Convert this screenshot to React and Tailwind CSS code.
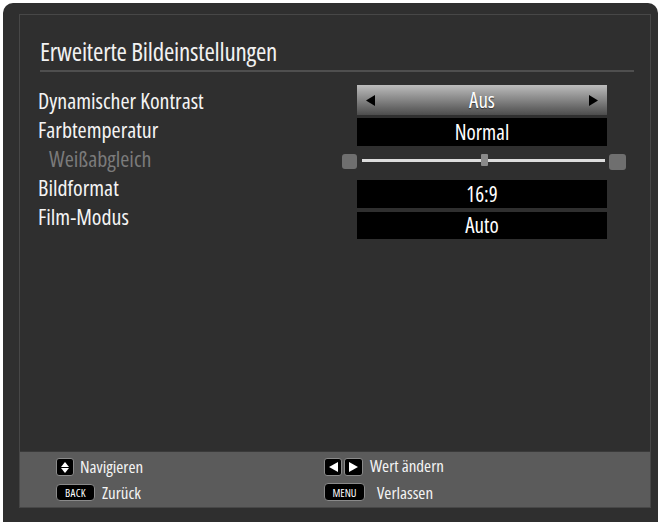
import React from 'react';

const font = { fontFamily: '"Open Sans", "DejaVu Sans Condensed", sans-serif', fontStretch: '75%' };

const labels = [
  { text: 'Dynamischer Kontrast' },
  { text: 'Farbtemperatur' },
  { text: 'Weißabgleich', dim: true },
  { text: 'Bildformat' },
  { text: 'Film-Modus' },
];

const Key = ({ children, className = '' }) => (
  <div className={`flex items-center justify-center rounded-[3px] border border-[#8a8a8a] bg-black ${className}`}>
    {children}
  </div>
);

const App = () => {
  return (
    <div className="w-[661px] h-[522px] bg-white pt-[3px] px-[3px] overflow-hidden" style={font}>
      <div className="h-[519px] rounded-t-[10px] bg-[#2f2f2f] pt-[11px] pl-[16px] pr-[6px]">
        <div className="w-[632px] h-[494px] border border-[#474747] flex flex-col">
          {/* title */}
          <div className="ml-[20px] w-[594px] mt-[21px] pb-[3px] border-b-2 border-[#4f4f4f]">
            <h1 className="text-[25px] leading-[31px] text-[#f2f2f2] tracking-[-0.2px]">Erweiterte Bildeinstellungen</h1>
          </div>

          <div className="flex items-start mt-[13px]">
            {/* labels */}
            <div className="w-[322px] pl-[18px] pt-[1px]">
              {labels.map((l) => (
                <div
                  key={l.text}
                  className={`h-[29px] text-[22px] leading-[29px] ${l.dim ? 'pl-[11px] text-[#7b7b7b]' : 'text-[#f4f4f4]'}`}
                >
                  {l.text}
                </div>
              ))}
            </div>

            {/* values */}
            <div className="w-[284px] flex flex-col text-[21px] text-white">
              <div className="ml-[15px] w-[250px] h-[30px] flex items-center justify-between px-[9px] bg-gradient-to-b from-[#bdbdbd] via-[#858585] to-[#4d4d4d]">
                <svg width="9" height="11" viewBox="0 0 9 11"><path d="M0 5.5 L9 0 L9 11 Z" fill="#000" /></svg>
                <span className="leading-none [text-shadow:0_1px_1px_#333]">Aus</span>
                <svg width="9" height="11" viewBox="0 0 9 11"><path d="M9 5.5 L0 0 L0 11 Z" fill="#000" /></svg>
              </div>
              <div className="ml-[15px] mt-[3px] w-[250px] h-[28px] bg-black flex items-center justify-center leading-none">Normal</div>
              <div className="h-[34px] pt-[8px] flex items-start">
                <div className="w-[15px] h-[15px] rounded-[3px] bg-[#6f6f6f]" />
                <div className="relative w-[243px] ml-[5px] mt-[5px] h-[3px] bg-[#dcdcdc]">
                  <div className="absolute left-[119px] top-[-5px] w-[7px] h-[12px] rounded-[1px] bg-[#8a8a8a]" />
                </div>
                <div className="w-[17px] h-[16px] ml-[4px] rounded-[3px] bg-[#6f6f6f]" />
              </div>
              <div className="ml-[15px] w-[250px] h-[28px] bg-black flex items-center justify-center leading-none">16:9</div>
              <div className="ml-[15px] mt-[4px] w-[250px] h-[27px] bg-black flex items-center justify-center leading-none">Auto</div>
            </div>
          </div>

          {/* footer */}
          <div className="mt-auto h-[56px] bg-[#5b5b5b] border-t border-[#3a3a3a] grid grid-cols-[268px_1fr] pl-[36px] pt-[6px] text-[17px] text-[#f4f4f4]">
            <div className="flex flex-col gap-[7px]">
              <div className="flex items-center gap-[6px] h-[18px]">
                <Key className="w-[18px] h-[18px] flex-col gap-[1px]">
                  <svg width="8" height="11" viewBox="0 0 8 11">
                    <path d="M4 0 L8 5 L0 5 Z" fill="#fff" />
                    <path d="M4 11 L8 6 L0 6 Z" fill="#fff" />
                  </svg>
                </Key>
                <span className="leading-none -mt-[2px]">Navigieren</span>
              </div>
              <div className="flex items-center gap-[7px] h-[18px]">
                <Key className="w-[39px] h-[17px] rounded-[4px]">
                  <span className="text-[11px] leading-none text-white tracking-[0.3px]">BACK</span>
                </Key>
                <span className="leading-none">Zurück</span>
              </div>
            </div>
            <div className="flex flex-col gap-[7px]">
              <div className="flex items-center h-[18px]">
                <Key className="w-[18px] h-[18px]">
                  <svg width="9" height="10" viewBox="0 0 9 10"><path d="M0 5 L9 0 L9 10 Z" fill="#fff" /></svg>
                </Key>
                <Key className="w-[19px] h-[18px] ml-[2px]">
                  <svg width="9" height="10" viewBox="0 0 9 10"><path d="M9 5 L0 0 L0 10 Z" fill="#fff" /></svg>
                </Key>
                <span className="ml-[7px] leading-none -mt-[4px]">Wert ändern</span>
              </div>
              <div className="flex items-center h-[18px]">
                <Key className="w-[41px] h-[18px] rounded-[4px]">
                  <span className="text-[11px] leading-none text-white">MENU</span>
                </Key>
                <span className="ml-[12px] leading-none">Verlassen</span>
              </div>
            </div>
          </div>
        </div>
      </div>
    </div>
  );
};

export default App;
